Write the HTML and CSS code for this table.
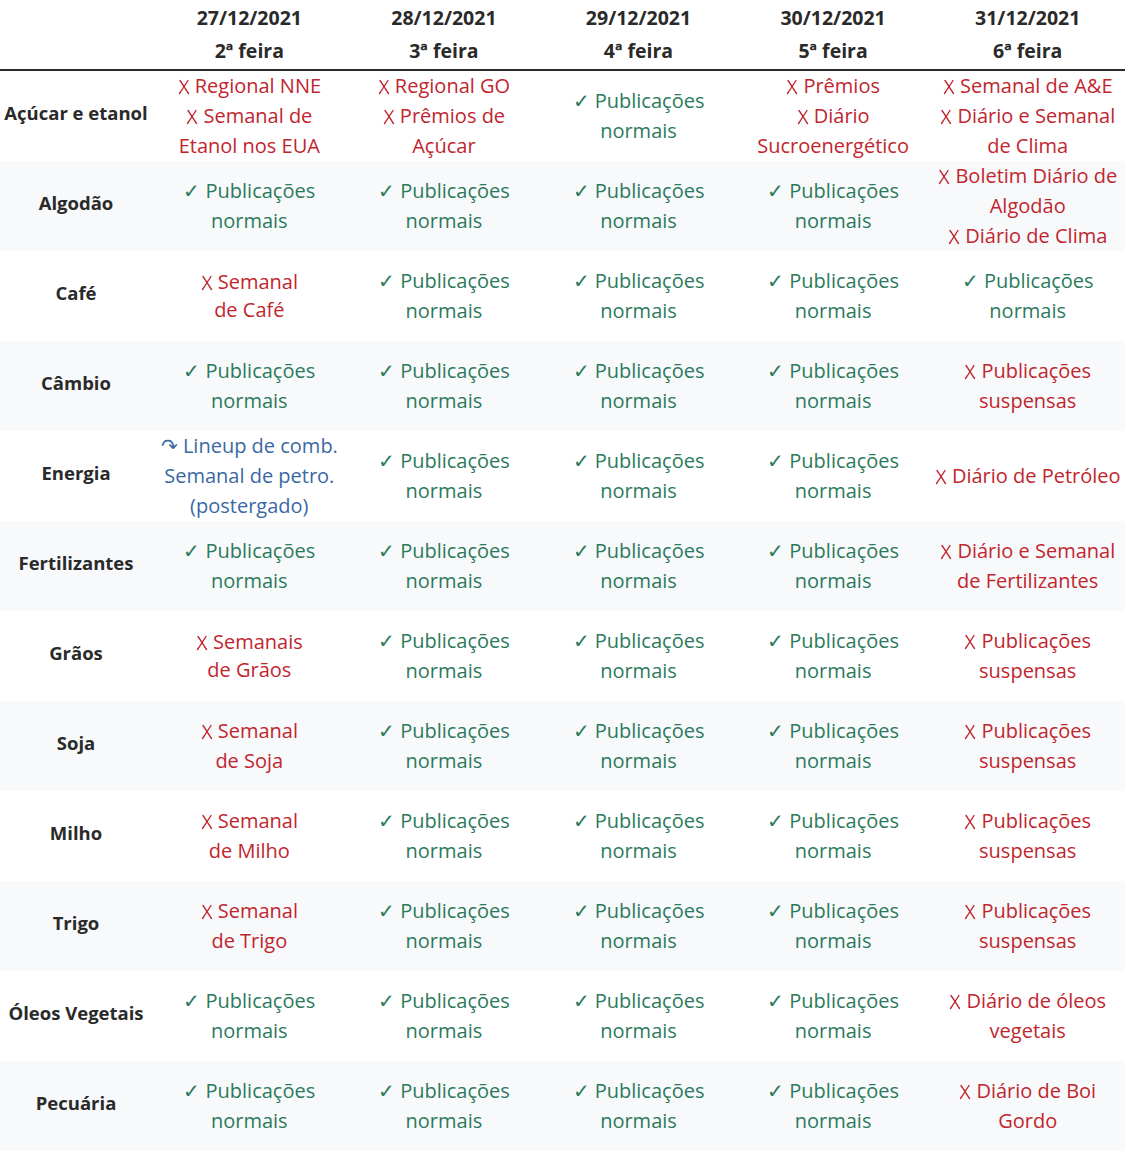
FILE: index.html
```html
<!DOCTYPE html>
<html lang="pt-BR">
<head>
<meta charset="utf-8">
<title>Calendário de publicações</title>
<link rel="stylesheet" href="styles.css">
</head>
<body>
<svg class="defs" width="0" height="0" aria-hidden="true">
  <symbol id="x" viewBox="0 0 12 16">
    <path d="M2 1.5 C4.5 5 7.5 10 10.5 14.5 M10 1.5 C7.5 5.5 4.5 10 1.5 14.5" fill="none" stroke="currentColor" stroke-width="1.4" stroke-linecap="round"/>
  </symbol>
</svg>
<table class="cal">
  <colgroup>
    <col class="c-label">
    <col class="c-day"><col class="c-day"><col class="c-day"><col class="c-day"><col class="c-day">
  </colgroup>
  <thead>
    <tr>
      <th></th>
      <th>27/12/2021<br>2ª feira</th>
      <th>28/12/2021<br>3ª feira</th>
      <th>29/12/2021<br>4ª feira</th>
      <th>30/12/2021<br>5ª feira</th>
      <th>31/12/2021<br>6ª feira</th>
    </tr>
  </thead>
  <tbody>
    <tr>
      <th>Açúcar e etanol</th>
      <td class="no"><svg class="ix"><use href="#x"/></svg> Regional NNE<br><svg class="ix"><use href="#x"/></svg> Semanal de<br>Etanol nos EUA</td>
      <td class="no"><svg class="ix"><use href="#x"/></svg> Regional GO<br><svg class="ix"><use href="#x"/></svg> Prêmios de<br>Açúcar</td>
      <td class="ok">✓ Publicações<br>normais</td>
      <td class="no"><svg class="ix"><use href="#x"/></svg> Prêmios<br><svg class="ix"><use href="#x"/></svg> Diário<br>Sucroenergético</td>
      <td class="no"><svg class="ix"><use href="#x"/></svg> Semanal de A&amp;E<br><svg class="ix"><use href="#x"/></svg> Diário e Semanal<br>de Clima</td>
    </tr>
    <tr>
      <th>Algodão</th>
      <td class="ok">✓ Publicações<br>normais</td>
      <td class="ok">✓ Publicações<br>normais</td>
      <td class="ok">✓ Publicações<br>normais</td>
      <td class="ok">✓ Publicações<br>normais</td>
      <td class="no"><svg class="ix"><use href="#x"/></svg> Boletim Diário de<br>Algodão<br><svg class="ix"><use href="#x"/></svg> Diário de Clima</td>
    </tr>
    <tr>
      <th>Café</th>
      <td class="no tight"><svg class="ix"><use href="#x"/></svg> Semanal<br>de Café</td>
      <td class="ok">✓ Publicações<br>normais</td>
      <td class="ok">✓ Publicações<br>normais</td>
      <td class="ok">✓ Publicações<br>normais</td>
      <td class="ok">✓ Publicações<br>normais</td>
    </tr>
    <tr>
      <th>Câmbio</th>
      <td class="ok">✓ Publicações<br>normais</td>
      <td class="ok">✓ Publicações<br>normais</td>
      <td class="ok">✓ Publicações<br>normais</td>
      <td class="ok">✓ Publicações<br>normais</td>
      <td class="no"><svg class="ix"><use href="#x"/></svg> Publicações<br>suspensas</td>
    </tr>
    <tr>
      <th>Energia</th>
      <td class="delay">↷ Lineup de comb.<br>Semanal de petro.<br>(postergado)</td>
      <td class="ok">✓ Publicações<br>normais</td>
      <td class="ok">✓ Publicações<br>normais</td>
      <td class="ok">✓ Publicações<br>normais</td>
      <td class="no"><svg class="ix"><use href="#x"/></svg> Diário de Petróleo</td>
    </tr>
    <tr>
      <th>Fertilizantes</th>
      <td class="ok">✓ Publicações<br>normais</td>
      <td class="ok">✓ Publicações<br>normais</td>
      <td class="ok">✓ Publicações<br>normais</td>
      <td class="ok">✓ Publicações<br>normais</td>
      <td class="no"><svg class="ix"><use href="#x"/></svg> Diário e Semanal<br>de Fertilizantes</td>
    </tr>
    <tr>
      <th>Grãos</th>
      <td class="no tight"><svg class="ix"><use href="#x"/></svg> Semanais<br>de Grãos</td>
      <td class="ok">✓ Publicações<br>normais</td>
      <td class="ok">✓ Publicações<br>normais</td>
      <td class="ok">✓ Publicações<br>normais</td>
      <td class="no"><svg class="ix"><use href="#x"/></svg> Publicações<br>suspensas</td>
    </tr>
    <tr>
      <th>Soja</th>
      <td class="no"><svg class="ix"><use href="#x"/></svg> Semanal<br>de Soja</td>
      <td class="ok">✓ Publicações<br>normais</td>
      <td class="ok">✓ Publicações<br>normais</td>
      <td class="ok">✓ Publicações<br>normais</td>
      <td class="no"><svg class="ix"><use href="#x"/></svg> Publicações<br>suspensas</td>
    </tr>
    <tr>
      <th>Milho</th>
      <td class="no"><svg class="ix"><use href="#x"/></svg> Semanal<br>de Milho</td>
      <td class="ok">✓ Publicações<br>normais</td>
      <td class="ok">✓ Publicações<br>normais</td>
      <td class="ok">✓ Publicações<br>normais</td>
      <td class="no"><svg class="ix"><use href="#x"/></svg> Publicações<br>suspensas</td>
    </tr>
    <tr>
      <th>Trigo</th>
      <td class="no"><svg class="ix"><use href="#x"/></svg> Semanal<br>de Trigo</td>
      <td class="ok">✓ Publicações<br>normais</td>
      <td class="ok">✓ Publicações<br>normais</td>
      <td class="ok">✓ Publicações<br>normais</td>
      <td class="no"><svg class="ix"><use href="#x"/></svg> Publicações<br>suspensas</td>
    </tr>
    <tr>
      <th>Óleos Vegetais</th>
      <td class="ok">✓ Publicações<br>normais</td>
      <td class="ok">✓ Publicações<br>normais</td>
      <td class="ok">✓ Publicações<br>normais</td>
      <td class="ok">✓ Publicações<br>normais</td>
      <td class="no"><svg class="ix"><use href="#x"/></svg> Diário de óleos<br>vegetais</td>
    </tr>
    <tr>
      <th>Pecuária</th>
      <td class="ok">✓ Publicações<br>normais</td>
      <td class="ok">✓ Publicações<br>normais</td>
      <td class="ok">✓ Publicações<br>normais</td>
      <td class="ok">✓ Publicações<br>normais</td>
      <td class="no"><svg class="ix"><use href="#x"/></svg> Diário de Boi<br>Gordo</td>
    </tr>
  </tbody>
</table>
</body>
</html>
```
FILE: styles.css
```css
html, body {
  margin: 0;
  padding: 0;
  background: #ffffff;
}

body {
  font-family: "Open Sans", "Liberation Sans", sans-serif;
  font-size: 20px;
  font-weight: 500;
  color: #2a2a2a;
}

.defs {
  position: absolute;
  width: 0;
  height: 0;
  overflow: hidden;
}

.ix {
  width: 12px;
  height: 16px;
  vertical-align: -2px;
}

.cal {
  width: 1125px;
  border-collapse: collapse;
  table-layout: fixed;
}

.c-label { width: 152px; }
.c-day { width: 194.6px; }

.cal thead th {
  height: 67px;
  padding: 0 0 2px;
  font-size: 19.5px;
  font-weight: 700;
  line-height: 33px;
  text-align: center;
  vertical-align: middle;
  color: #2a2a2a;
  border-bottom: 2px solid #2a2a2a;
}

.cal tbody tr {
  height: 90px;
}

.cal tbody tr:nth-child(even) {
  background: #f7f9fb;
}

.cal tbody th {
  padding: 0 0 6px;
  font-size: 18.5px;
  font-weight: 700;
  text-align: center;
  vertical-align: middle;
  line-height: 30px;
  color: #2a2a2a;
}

.cal tbody td {
  padding: 0;
  text-align: center;
  vertical-align: middle;
  line-height: 30px;
}

.cal tbody td.tight {
  line-height: 28px;
}

.ok { color: #2c7a5c; }
.no { color: #c1262e; }
.delay { color: #3a68a3; }
```
